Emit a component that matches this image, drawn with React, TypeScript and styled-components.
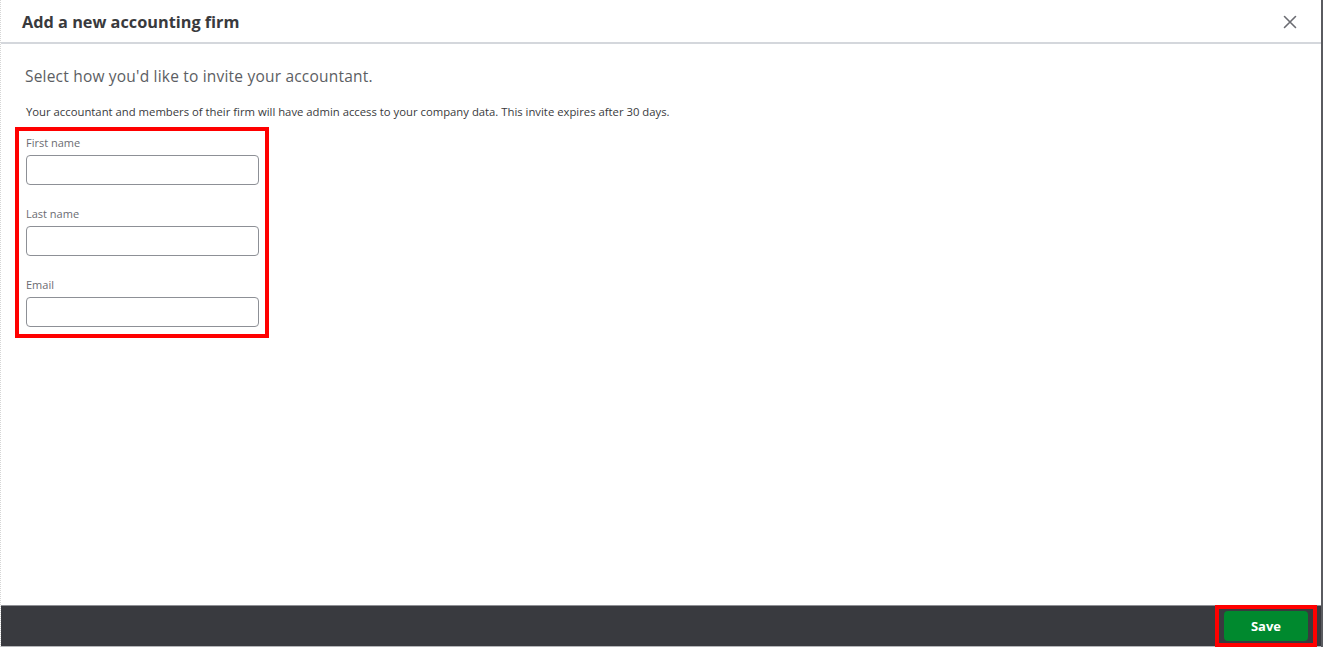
import React from "react";
import styled, { createGlobalStyle } from "styled-components";

const Global = createGlobalStyle`
  html, body { margin: 0; padding: 0; background: #ffffff; }
  body { font-family: "Open Sans", "Liberation Sans", sans-serif; color: #393a3d; }
  * { box-sizing: border-box; }
`;

const Page = styled.div`
  width: 1325px;
  height: 647px;
  display: flex;
  background: #ffffff;
  overflow: hidden;
`;

const Dialog = styled.div`
  width: 1323px;
  height: 647px;
  display: flex;
  flex-direction: column;
  border-left: 1px dotted #d6d6d6;
  border-right: 2px solid #5a5b60;
`;

const Header = styled.header`
  height: 44px;
  flex: none;
  display: flex;
  align-items: center;
  justify-content: space-between;
  padding: 1px 21px 0 21px;
  border-bottom: 2px solid #d4d7dc;
`;

const Title = styled.h1`
  margin: 0;
  font-size: 16.3px;
  font-weight: 700;
  color: #393a3d;
`;

const CloseButton = styled.button`
  border: none;
  background: none;
  padding: 0;
  width: 20px;
  height: 20px;
  display: flex;
  align-items: center;
  justify-content: center;
  color: #6b6c72;
  cursor: pointer;
`;

const Body = styled.main`
  flex: 1;
  display: flex;
  flex-direction: column;
  padding: 21px 0 0 14px;
`;

const Heading = styled.h2`
  margin: 0 0 0 10px;
  font-size: 15.5px;
  font-weight: 400;
  color: #5c5e63;
  letter-spacing: 0.2px;
`;

const Note = styled.p`
  margin: 17px 0 8px 11px;
  font-size: 11.3px;
  color: #393a3d;
`;

const Highlight = styled.div`
  border: 4px solid #ff0000;
`;

const Fields = styled(Highlight)`
  width: 254px;
  padding: 4px 6px 7px 7px;
  display: flex;
  flex-direction: column;
  gap: 21px;
`;

const Field = styled.label`
  display: flex;
  flex-direction: column;
  gap: 5px;
`;

const LabelText = styled.span`
  font-size: 11px;
  color: #6b6c72;
  line-height: 15px;
`;

const Input = styled.input`
  width: 233px;
  height: 30px;
  border: 1px solid #8d9096;
  border-radius: 4px;
  background: #ffffff;
  font-size: 13px;
  padding: 0 8px;
  outline: none;
`;

const Footer = styled.footer`
  height: 42px;
  flex: none;
  display: flex;
  align-items: center;
  justify-content: flex-end;
  background: #393a3f;
  border-top: 1px solid #8f9095;
  border-bottom: 1px solid #b5b6b9;
  padding-right: 4px;
`;

const SaveFrame = styled(Highlight)`
  height: 42px;
  padding: 3px 5px;
  display: flex;
  align-items: center;
`;

const SaveButton = styled.button`
  width: 84px;
  height: 30px;
  border: none;
  border-radius: 4px;
  background: #00892e;
  color: #ffffff;
  font-family: "Open Sans", "Liberation Sans", sans-serif;
  font-weight: 700;
  font-size: 13px;
  cursor: pointer;
`;

export default function App() {
  return (
    <>
      <Global />
      <Page>
        <Dialog>
          <Header>
            <Title>Add a new accounting firm</Title>
            <CloseButton aria-label="Close">
              <svg width="14" height="14" viewBox="0 0 14 14" fill="none" stroke="currentColor" strokeWidth="1.6" strokeLinecap="round">
                <path d="M1.5 1.5 L12.5 12.5 M12.5 1.5 L1.5 12.5" />
              </svg>
            </CloseButton>
          </Header>
          <Body>
            <Heading>Select how you'd like to invite your accountant.</Heading>
            <Note>
              Your accountant and members of their firm will have admin access to your company data. This invite expires after 30 days.
            </Note>
            <Fields>
              <Field>
                <LabelText>First name</LabelText>
                <Input type="text" />
              </Field>
              <Field>
                <LabelText>Last name</LabelText>
                <Input type="text" />
              </Field>
              <Field>
                <LabelText>Email</LabelText>
                <Input type="email" />
              </Field>
            </Fields>
          </Body>
          <Footer>
            <SaveFrame>
              <SaveButton>Save</SaveButton>
            </SaveFrame>
          </Footer>
        </Dialog>
      </Page>
    </>
  );
}
